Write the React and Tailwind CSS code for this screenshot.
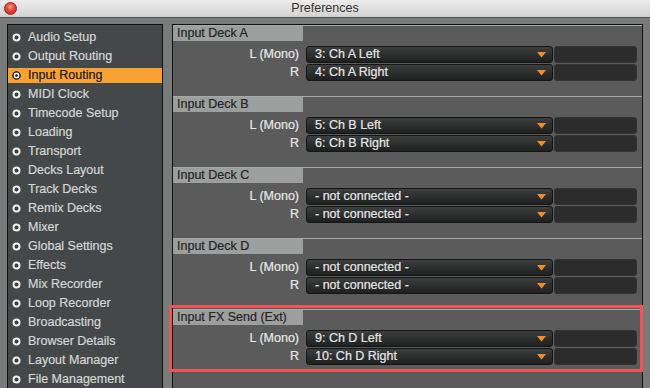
import React from "react";

const menu = [
  "Audio Setup",
  "Output Routing",
  "Input Routing",
  "MIDI Clock",
  "Timecode Setup",
  "Loading",
  "Transport",
  "Decks Layout",
  "Track Decks",
  "Remix Decks",
  "Mixer",
  "Global Settings",
  "Effects",
  "Mix Recorder",
  "Loop Recorder",
  "Broadcasting",
  "Browser Details",
  "Layout Manager",
  "File Management",
];

const sections = [
  { title: "Input Deck A", left: "3: Ch A Left", right: "4: Ch A Right" },
  { title: "Input Deck B", left: "5: Ch B Left", right: "6: Ch B Right" },
  { title: "Input Deck C", left: "- not connected -", right: "- not connected -" },
  { title: "Input Deck D", left: "- not connected -", right: "- not connected -" },
  { title: "Input FX Send (Ext)", left: "9: Ch D Left", right: "10: Ch D Right" },
];

function Bullet({ active }) {
  if (active) {
    return (
      <svg width="9" height="9" viewBox="0 0 9 9">
        <circle cx="4.5" cy="4.5" r="3.6" fill="#fff" stroke="#111" strokeWidth="1.4" />
        <circle cx="4.5" cy="4.5" r="1.3" fill="#111" />
      </svg>
    );
  }
  return (
    <svg width="9" height="9" viewBox="0 0 9 9">
      <circle cx="4.5" cy="4.5" r="3" fill="#3a3c3c" stroke="#f2f2f2" strokeWidth="2" />
    </svg>
  );
}

function MenuItem({ label, active }) {
  return (
    <div className="h-[19px] flex items-center">
      <div
        className={
          active
            ? "h-[15px] w-full flex items-center bg-[#f7a233] text-[#161616] [-webkit-text-stroke:0.2px_#161616]"
            : "h-[15px] w-full flex items-center text-[#d4d6d6] [-webkit-text-stroke:0.2px_#d4d6d6]"
        }
      >
        <div className="w-[20px] pl-[4px] flex items-center">
          <Bullet active={active} />
        </div>
        <span>{label}</span>
      </div>
    </div>
  );
}

function Dropdown({ value }) {
  return (
    <div className="flex items-center gap-px">
      <div className="w-[247px] h-[17px] flex items-center justify-between pl-[8px] pr-[6px] rounded-[3px] border border-[#141515] bg-gradient-to-b from-[#3d3e3e] to-[#1f2020] text-[#e6e6e6] [-webkit-text-stroke:0.2px_#e6e6e6]">
        <span>{value}</span>
        <svg width="9" height="6" viewBox="0 0 9 6">
          <path d="M0 0 H9 L4.5 5.5 Z" fill="#f68d22" />
        </svg>
      </div>
      <div className="w-[83px] h-[17px] rounded-[3px] bg-[#2b2c2b] border border-[#323332]" />
    </div>
  );
}

function Row({ label, value }) {
  return (
    <div className="flex items-center">
      <div className="w-[133px] pr-[7px] text-right text-[#e8e8e8] [-webkit-text-stroke:0.2px_#e8e8e8]">
        {label}
      </div>
      <Dropdown value={value} />
    </div>
  );
}

function Section({ title, left, right }) {
  return (
    <div className="h-[71px] border-t border-[#a6a9a8] flex flex-col">
      <div className="w-[130px] h-[15px] bg-[#9c9f9e] text-[#232424] [-webkit-text-stroke:0.2px_#232424] pl-[4px] flex items-center">
        {title}
      </div>
      <div className="pt-[5px] flex flex-col gap-px">
        <Row label="L (Mono)" value={left} />
        <Row label="R" value={right} />
      </div>
    </div>
  );
}

export default function App() {
  return (
    <div
      className="relative w-[650px] h-[388px] overflow-hidden bg-[#777c7b] text-[12.5px] leading-none"
      style={{ fontFamily: '"Liberation Sans", Arial, sans-serif' }}
    >
      <div className="h-[18px] relative flex items-center justify-center bg-gradient-to-b from-[#ededed] to-[#d2d2d2] border-b border-[#4c4f4f]">
        <div className="absolute left-[4px] top-[2px] w-[13px] h-[13px] rounded-full border border-[#9a2a22] bg-[radial-gradient(circle_at_50%_35%,#ff9a8a_0%,#e2483a_45%,#b8231a_100%)]" />
        <span className="text-[12.5px] text-[#333]">Preferences</span>
      </div>

      <div className="flex gap-[9px] pt-[6px] pl-[7px]">
        <div className="w-[156px] h-[380px] bg-[#454848] border border-[#111] pt-[3px]">
          {menu.map((m) => (
            <MenuItem key={m} label={m} active={m === "Input Routing"} />
          ))}
        </div>

        <div className="w-[471px] h-[380px] bg-[#5a5b5a] border border-[#111]">
          {sections.map((s) => (
            <Section key={s.title} {...s} />
          ))}
        </div>
      </div>

      <div className="absolute left-[169px] top-[305px] w-[474px] h-[67px] border-[3px] border-[#ec5656]" />
    </div>
  );
}
